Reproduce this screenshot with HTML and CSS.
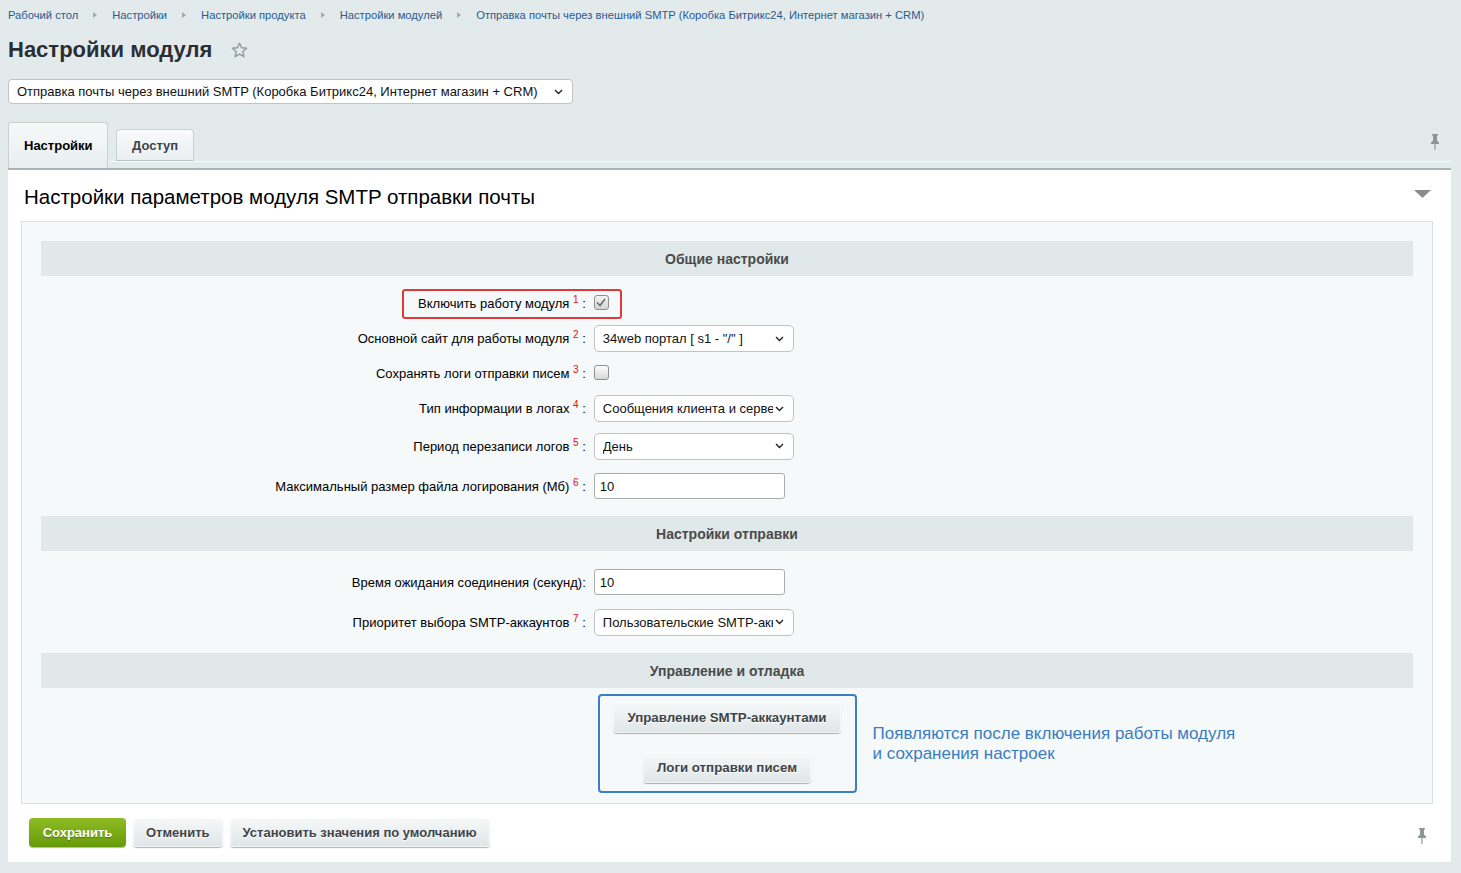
FILE: index.html
```html
<!DOCTYPE html>
<html lang="ru">
<head>
<meta charset="utf-8">
<title>Настройки модуля</title>
<link rel="stylesheet" href="styles.css">
</head>
<body>
<div class="page">
  <nav class="crumbs">
    <a href="#">Рабочий стол</a><span class="crumb-arrow"></span>
    <a href="#">Настройки</a><span class="crumb-arrow"></span>
    <a href="#">Настройки продукта</a><span class="crumb-arrow"></span>
    <a href="#">Настройки модулей</a><span class="crumb-arrow"></span>
    <a href="#">Отправка почты через внешний SMTP (Коробка Битрикс24, Интернет магазин + CRM)</a>
  </nav>

  <h1 class="title">Настройки модуля
    <svg class="star" width="17" height="16" viewBox="0 0 17 16"><path d="M8.5 1.2l2.1 4.6 5 .5-3.8 3.4 1.1 5-4.4-2.6-4.4 2.6 1.1-5L1.4 6.3l5-.5z" fill="none" stroke="#8c9aa4" stroke-width="1.4" stroke-linejoin="round"/></svg>
  </h1>

  <div class="select main-select">
    <span class="select-text">Отправка почты через внешний SMTP (Коробка Битрикс24, Интернет магазин + CRM)</span>
    <svg class="chev" width="9" height="6" viewBox="0 0 9 6"><path d="M1 1l3.5 3.5L8 1" fill="none" stroke="#222" stroke-width="1.4"/></svg>
  </div>

  <div class="tabbar">
    <div class="tab tab-active">Настройки</div>
    <div class="tab">Доступ</div>
    <svg class="pin pin-top" width="10" height="17" viewBox="0 0 10 17"><path d="M2 1h6v1.5H7v5l2 2v1.5H1V9.5l2-2v-5H2z" fill="#8e9599"/><path d="M5 11v6" stroke="#8e9599" stroke-width="1.2"/></svg>
  </div>

  <div class="panel">
    <div class="panel-head">
      <h2 class="panel-title">Настройки параметров модуля SMTP отправки почты</h2>
      <svg class="collapse" width="17" height="8" viewBox="0 0 17 8"><path d="M0 0h17L8.5 8z" fill="#8c8c8c"/></svg>
    </div>

    <div class="box">
      <div class="section-head">Общие настройки</div>
      <div class="rows">
        <div class="row">
          <div class="label">Включить работу модуля <sup>1</sup> :</div>
          <div class="ctrl"><span class="check checked"><svg width="10" height="9" viewBox="0 0 10 9"><path d="M1 4.5l3 3L9 1" fill="none" stroke="#6d6d6d" stroke-width="1.6"/></svg></span></div>
          <span class="mark-red"></span>
        </div>
        <div class="row">
          <div class="label">Основной сайт для работы модуля <sup>2</sup> :</div>
          <div class="ctrl"><div class="select field-select"><span class="select-text">34web портал [ s1 - "/" ]</span><svg class="chev" width="9" height="6" viewBox="0 0 9 6"><path d="M1 1l3.5 3.5L8 1" fill="none" stroke="#222" stroke-width="1.4"/></svg></div></div>
        </div>
        <div class="row">
          <div class="label">Сохранять логи отправки писем <sup>3</sup> :</div>
          <div class="ctrl"><span class="check"></span></div>
        </div>
        <div class="row">
          <div class="label">Тип информации в логах <sup>4</sup> :</div>
          <div class="ctrl"><div class="select field-select"><span class="select-text">Сообщения клиента и сервера</span><svg class="chev" width="9" height="6" viewBox="0 0 9 6"><path d="M1 1l3.5 3.5L8 1" fill="none" stroke="#222" stroke-width="1.4"/></svg></div></div>
        </div>
        <div class="row row-lg">
          <div class="label">Период перезаписи логов <sup>5</sup> :</div>
          <div class="ctrl"><div class="select field-select"><span class="select-text">День</span><svg class="chev" width="9" height="6" viewBox="0 0 9 6"><path d="M1 1l3.5 3.5L8 1" fill="none" stroke="#222" stroke-width="1.4"/></svg></div></div>
        </div>
        <div class="row row-lg">
          <div class="label">Максимальный размер файла логирования (Мб) <sup>6</sup> :</div>
          <div class="ctrl"><div class="input">10</div></div>
        </div>
      </div>

      <div class="section-head">Настройки отправки</div>
      <div class="rows rows-send">
        <div class="row row-lg">
          <div class="label">Время ожидания соединения (секунд):</div>
          <div class="ctrl"><div class="input">10</div></div>
        </div>
        <div class="row row-lg">
          <div class="label">Приоритет выбора SMTP-аккаунтов <sup>7</sup> :</div>
          <div class="ctrl"><div class="select field-select"><span class="select-text">Пользовательские SMTP-аккаунты</span><svg class="chev" width="9" height="6" viewBox="0 0 9 6"><path d="M1 1l3.5 3.5L8 1" fill="none" stroke="#222" stroke-width="1.4"/></svg></div></div>
        </div>
      </div>

      <div class="section-head">Управление и отладка</div>
      <div class="tools">
        <div></div>
        <div class="tools-frame">
          <button class="btn btn-tool">Управление SMTP-аккаунтами</button>
          <button class="btn btn-tool">Логи отправки писем</button>
        </div>
        <div class="tools-note">Появляются после включения работы модуля<br>и сохранения настроек</div>
      </div>
    </div>

    <div class="footer">
      <div class="footer-btns">
        <button class="btn btn-save">Сохранить</button>
        <button class="btn">Отменить</button>
        <button class="btn">Установить значения по умолчанию</button>
      </div>
      <svg class="pin pin-bottom" width="10" height="17" viewBox="0 0 10 17"><path d="M2 1h6v1.5H7v5l2 2v1.5H1V9.5l2-2v-5H2z" fill="#8e9599"/><path d="M5 11v6" stroke="#8e9599" stroke-width="1.2"/></svg>
    </div>
  </div>
</div>
</body>
</html>
```

FILE: styles.css
```css
* { box-sizing: border-box; }
html, body { margin: 0; padding: 0; }
body {
  background: #e3eaec;
  font-family: "Liberation Sans", Arial, sans-serif;
  color: #000;
  font-size: 13px;
}
.page { padding: 0 10px 9px 8px; }

.crumbs {
  display: flex;
  align-items: center;
  height: 30px;
  font-size: 11.2px;
}
.crumbs a { color: #2a5b8f; text-decoration: none; }
.crumb-arrow {
  width: 0; height: 0;
  margin: 0 15px 0 15px;
  border-left: 4px solid #a2abb0;
  border-top: 3.5px solid transparent;
  border-bottom: 3.5px solid transparent;
}

.title {
  margin: 6px 0 0;
  height: 28px;
  line-height: 28px;
  font-size: 22px;
  font-weight: bold;
  color: #2b2f33;
  display: flex;
  align-items: center;
}
.star { margin-left: 19px; }

.select {
  position: relative;
  display: flex;
  align-items: center;
  background: #fff;
  border: 1px solid #bfc3c5;
  border-radius: 4px;
  color: #111;
  font-size: 13px;
  overflow: hidden;
  white-space: nowrap;
}
.select .chev { position: absolute; right: 9px; top: 50%; margin-top: -3px; }
.select-text { overflow: hidden; }
.main-select {
  margin-top: 15px;
  width: 565px;
  height: 25px;
  padding: 0 30px 0 8px;
}
.field-select {
  width: 200px;
  height: 27px;
  padding: 0 20px 0 8px;
  border-radius: 5px;
}

.tabbar {
  margin-top: 19px;
  display: flex;
  align-items: flex-end;
  gap: 8px;
  height: 39px;
  border-bottom: 1px solid #f6f9f9;
}
.tab {
  height: 32px;
  padding: 0 15px;
  display: flex;
  align-items: center;
  font-weight: bold;
  font-size: 13px;
  color: #3c4448;
  background: linear-gradient(#fafbfb, #e9eef0);
  border: 1px solid #c9d1d4;
  border-bottom-color: #b9c3c6;
  border-radius: 4px 4px 0 0;
}
.tab-active {
  height: 46px;
  margin-bottom: -7px;
  padding: 0 14px 0 15px;
  width: 100px;
  color: #000;
  background: linear-gradient(#f7f9f9, #e8eef0);
  border-color: #c9d1d4;
  border-bottom: none;
  position: relative;
  z-index: 1;
}
.pin-top { margin: 0 11px 11px auto; align-self: flex-end; }

.panel {
  background: #fff;
  border-top: 2px solid #a9b4b8;
  margin-top: 6px;
}
.panel-head {
  height: 51px;
  display: flex;
  align-items: center;
  justify-content: space-between;
  padding: 0 20px 0 16px;
}
.panel-title {
  margin: 0;
  font-size: 20.5px;
  font-weight: normal;
  color: #000;
  padding-top: 2px;
}
.collapse { margin-top: -4px; }

.box {
  margin: 0 18px 0 13px;
  background: #f5f9f9;
  border: 1px solid #d8e1e3;
  padding: 19px 19px 10px;
}
.section-head {
  height: 35px;
  background: #e0e8ea;
  display: flex;
  align-items: center;
  justify-content: center;
  font-weight: bold;
  font-size: 14px;
  color: #4b4b4b;
  padding-top: 1px;
}
.rows { padding: 10px 0; }
.rows-send { padding: 11px 0 11px; }
.row {
  position: relative;
  display: grid;
  grid-template-columns: 40% 60%;
  align-items: center;
  height: 35px;
}
.row-lg { height: 40px; }
.label {
  text-align: right;
  padding-right: 4px;
  color: #000;
  white-space: nowrap;
}
.label sup {
  color: #e01010;
  font-size: 10px;
  vertical-align: 0;
  position: relative;
  top: -5px;
}
.ctrl { padding-left: 4px; display: flex; align-items: center; }

.check {
  width: 15px;
  height: 15px;
  border: 1px solid #8f8f8f;
  border-radius: 3px;
  background: linear-gradient(#fdfdfd, #d9d9d9);
  display: flex;
  align-items: center;
  justify-content: center;
  margin-top: -2px;
}
.check.checked { background: linear-gradient(#f4f4f4, #d4d4d4); }

.mark-red {
  position: absolute;
  left: 361px;
  top: 3px;
  width: 220px;
  height: 30px;
  border: 2px solid #e0393a;
  border-radius: 3px;
  pointer-events: none;
}

.input {
  width: 191px;
  height: 26px;
  border: 1px solid #a9adb0;
  border-radius: 3px;
  background: #fff;
  padding: 0 5px;
  display: flex;
  align-items: center;
  color: #111;
}

.tools {
  display: grid;
  grid-template-columns: 1fr auto 1fr;
  align-items: center;
  padding-top: 6px;
}
.tools-frame {
  width: 259px;
  height: 99px;
  border: 2px solid #3b7ec2;
  border-radius: 4px;
  display: flex;
  flex-direction: column;
  align-items: center;
  padding-top: 6px;
  gap: 19px;
}
.tools-note {
  padding-left: 16px;
  font-size: 17px;
  line-height: 20px;
  color: #3a7cc0;
  margin-top: 1px;
}

.btn {
  font-family: "Liberation Sans", Arial, sans-serif;
  font-weight: bold;
  font-size: 13px;
  color: #3f4549;
  height: 29px;
  padding: 0 13px;
  border: none;
  border-radius: 4px;
  background: linear-gradient(#f7f9f9, #dfe5e7);
  box-shadow: 0 1px 1px rgba(0,0,0,.3), inset 0 0 0 1px rgba(255,255,255,.6);
  text-shadow: 0 1px #fff;
  cursor: pointer;
}
.btn-tool { height: 31px; padding: 0 14px; font-size: 13.3px; }
.btn-save {
  color: #fff;
  background: linear-gradient(#8ebc24, #669a0a);
  text-shadow: 0 1px rgba(0,0,0,.3);
  box-shadow: 0 1px 1px rgba(0,0,0,.3);
  width: 97px;
}
.footer {
  display: flex;
  align-items: center;
  justify-content: space-between;
  padding: 14px 24px 15px 21px;
}
.footer-btns { display: flex; gap: 7px; }
.pin-bottom { margin-top: 6px; }
```
